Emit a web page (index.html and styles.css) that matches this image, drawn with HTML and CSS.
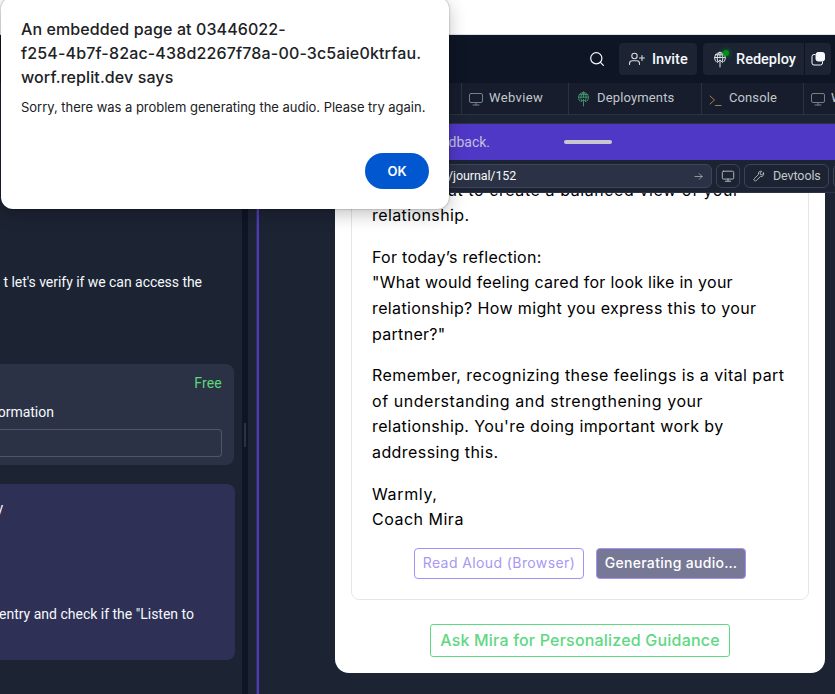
FILE: index.html
```html
<!DOCTYPE html>
<html lang="en">
<head>
<meta charset="utf-8">
<title>Journal - Replit</title>
<link rel="stylesheet" href="styles.css">
</head>
<body>
<svg width="0" height="0" class="defs" aria-hidden="true">
  <symbol id="monitor" viewBox="0 0 16 16"><rect x="1.5" y="2.5" width="13" height="9" rx="1.5"/><path d="M8 11.500V14M5 14h6"/></symbol>
  <symbol id="globe" viewBox="0 0 14 17"><path d="M3.200 10.800A5.400 5.400 0 1 1 10.800 10.800M1.600 6.500h10.800M2.400 3.800h9.200M4.700 10.500C3.600 7 4.300 2.500 7 1.200 9.700 2.500 10.400 7 9.300 10.500M7 1v6M7 16V9M4.500 11.500 7 9l2.500 2.500"/></symbol>
</svg>
<div class="window">
  <div class="browser-strip"></div>
  <header class="topbar">
    <svg class="icon search" viewBox="0 0 16 16"><circle cx="7.300" cy="7.300" r="5.600"/><path d="m11.400 11.400 3 3"/></svg>
    <button class="btn invite">
      <svg class="icon" viewBox="0 0 17 16"><circle cx="6.500" cy="5" r="2.700"/><path d="M1.500 13.500V12.500A2.800 2.800 0 0 1 4.300 9.800H8.700A2.800 2.800 0 0 1 11.500 12.500V13.500M14 4.500v5M11.500 7h5"/></svg>
      <span>Invite</span>
    </button>
    <div class="split">
      <button class="btn redeploy">
        <span class="status"><svg class="icon"><use href="#globe"/></svg><i class="dot"></i></span>
        <span>Redeploy</span>
      </button>
      <button class="btn copy"><svg class="icon" viewBox="0 0 14 14"><path d="M4 2.500H3A2 2 0 0 0 1 4.500v6.500a2 2 0 0 0 2 2h6.500a2 2 0 0 0 2-2V10"/><rect class="solid" x="5" y="0.500" width="8.500" height="8.500" rx="2"/></svg></button>
    </div>
  </header>
  <div class="workspace">
    <aside class="chat">
      <p class="message"><span>t let's verify if we can access the</span></p>
      <section class="card checkpoint">
        <div class="price">Free</div>
        <div class="label"><span>ormation</span></div>
        <div class="field"></div>
      </section>
      <section class="card prompt">
        <p class="first"><span>y</span></p>
        <p class="second"><span>entry and check if the "Listen to</span></p>
      </section>
    </aside>
    <div class="gutter"><i></i></div>
    <main class="pane">
      <nav class="tabs">
        <div class="tab t-web"><svg class="icon mon"><use href="#monitor"/></svg><span>Webview</span></div>
        <div class="tab t-dep"><svg class="icon globe"><use href="#globe"/></svg><span>Deployments</span></div>
        <div class="tab t-con"><svg class="icon prompt-icon" viewBox="0 0 13 13"><path d="m1 2 4.500 4L1 10M6.500 11.500H12"/></svg><span>Console</span></div>
        <div class="tab t-last"><svg class="icon mon"><use href="#monitor"/></svg><span>Webview</span></div>
      </nav>
      <div class="preview">
        <div class="banner"><span class="feedback">feedback.</span><i></i></div>
        <div class="address">
          <div class="url"><span>/journal/152</span><svg class="icon arrow" viewBox="0 0 10 10"><path d="M1 5h8M5.800 1.800 9 5 5.800 8.200"/></svg></div>
          <button class="tool device"><svg class="icon"><use href="#monitor"/></svg></button>
          <button class="tool dev"><svg class="icon wrench" viewBox="0 0 14 14"><path d="M12.400 3.600 10.300 5.500 8.600 5.200 8.300 3.600 10.200 1.600C8 .8 5.800 2.500 6.400 5.200L1.600 10a1.600 1.600 0 0 0 2.300 2.300L8.700 7.500C11.300 8.200 13.200 5.900 12.400 3.600Z"/></svg><span>Devtools</span></button>
          <button class="tool next"></button>
        </div>
        <div class="webview">
          <article class="entry">
            <div class="letter">
              <p><span class="l0">but to create a balanced view of your</span><br><span class="l1">relationship.</span></p>
              <p><span class="l2">For today’s reflection:</span><br><span class="l3">"What would feeling cared for look like in your</span><br><span class="l4">relationship? How might you express this to your</span><br><span class="l5">partner?"</span></p>
              <p><span class="l6">Remember, recognizing these feelings is a vital part</span><br><span class="l7">of understanding and strengthening your</span><br><span class="l8">relationship. You're doing important work by</span><br><span class="l9">addressing this.</span></p>
              <p class="signature"><span class="l10">Warmly,</span><br><span class="l11">Coach Mira</span></p>
              <div class="actions">
                <button class="read"><span>Read Aloud (Browser)</span></button>
                <button class="generating"><span>Generating audio…</span></button>
              </div>
            </div>
            <button class="ask"><span>Ask Mira for Personalized Guidance</span></button>
          </article>
        </div>
      </div>
    </main>
  </div>
</div>
<div class="dialog" role="alertdialog">
  <h1><span class="d1">An embedded page at 03446022-</span><br><span class="d2">f254-4b7f-82ac-438d2267f78a-00-3c5aie0ktrfau.</span><br><span class="d3">worf.replit.dev says</span></h1>
  <p>Sorry, there was a problem generating the audio. Please try again.</p>
  <button>OK</button>
</div>
</body>
</html>
```
FILE: styles.css
```css
* { box-sizing: border-box; }
body { margin: 0; width: 835px; height: 694px; overflow: hidden; background: #1c2333; color: #f5f9fc; font-family: Roboto, "Noto Sans", sans-serif; }
button { font: inherit; color: inherit; margin: 0; padding: 0; border: 0; background: none; }
p, h1 { margin: 0; font-weight: 400; }
span { white-space: nowrap; }
.defs { display: block; position: absolute; }
.icon { fill: none; stroke: currentColor; stroke-width: 1; stroke-linecap: round; stroke-linejoin: round; flex: none; }
.window { width: 835px; height: 694px; display: flex; flex-direction: column; overflow: hidden; }
.browser-strip { height: 35px; flex: none; background: #fff; border-bottom: 1px solid #dfe1e3; }

.topbar { height: 48px; flex: none; background: #0e1525; display: flex; align-items: center; justify-content: flex-end; padding-right: 4px; font-size: 14.500px; font-weight: 500; }
.search { width: 16px; height: 16px; margin-right: 14px; stroke-width: 1.200; }
.btn { height: 32px; background: #1c2333; display: flex; align-items: center; }
.invite { width: 78px; border-radius: 4px; padding-left: 9px; gap: 7px; margin-right: 6px; }
.invite .icon { width: 17px; height: 16px; color: #d5dade; stroke-width: 1.100; }
.split { display: flex; gap: 1px; }
.redeploy { width: 101px; padding-left: 10px; gap: 9px; border-radius: 4px 0 0 4px; }
.status { position: relative; display: flex; }
.status .icon { width: 14px; height: 17px; color: #e1e5e9; }
.dot { position: absolute; width: 6px; height: 6px; left: 10px; top: -1px; border-radius: 50%; background: #009118; box-shadow: 0 0 5px #009118; }
.copy { width: 26px; border-radius: 0 4px 4px 0; justify-content: center; }
.copy .icon { width: 14px; height: 14px; }
.solid { fill: #f5f9fc; }

.workspace { flex: 1; display: flex; min-height: 0; }
.chat { width: 242px; flex: none; padding-top: 189px; overflow: hidden; font-size: 14px; line-height: 20px; }
.message { width: 202px; display: flex; justify-content: flex-end; }
.message span { letter-spacing: -.04px; }
.card { border-radius: 8px; display: flex; flex-direction: column; }
.checkpoint { width: 234px; height: 101px; margin-top: 72px; background: #2b3245; padding: 9px 12px 0 0; border-radius: 0 8px 8px 0; }
.price { align-self: flex-end; color: #5cd87c; letter-spacing: .2px; }
.label { width: 54px; margin-top: 9px; display: flex; justify-content: flex-end; }
.field { height: 28px; margin-top: 7px; border: 1px solid #4e5569; border-left: 0; border-radius: 0 4px 4px 0; }
.prompt { width: 235px; height: 176px; margin-top: 19px; background: #2f3056; border-radius: 0 8px 8px 0; padding-top: 14px; }
.first { width: 3px; display: flex; justify-content: flex-end; }
.second { width: 194px; margin-top: 86px; display: flex; justify-content: flex-end; }
.gutter { width: 6px; flex: none; background: #0e1525; padding: 340px 2px 0; }
.gutter i { display: block; height: 24px; background: #2b3245; }

.pane { flex: 1; min-width: 0; display: flex; flex-direction: column; }
.tabs { height: 32px; flex: none; background: #171d2d; border-bottom: 1px solid #2b3245; display: flex; padding-left: 213px; font-size: 13px; color: #c2c8cc; overflow: hidden; }
.tab { flex: none; border-left: 1px solid #2b3245; display: flex; align-items: center; padding-bottom: 2px; }
.t-web { width: 107px; padding-left: 6px; gap: 5px; letter-spacing: .35px; }
.t-dep { width: 133px; padding-left: 8px; gap: 7px; letter-spacing: .15px; }
.t-con { width: 102px; padding-left: 7px; gap: 7px; letter-spacing: .1px; }
.t-last { width: 107px; padding-left: 6px; gap: 5px; }
.mon { width: 16px; height: 16px; color: #787e89; margin-top: 2px; }
.globe { width: 13px; height: 16px; color: #45966a; margin-top: 2px; }
.prompt-icon { width: 13px; height: 13px; color: #9b8545; margin-top: 5px; }
.preview { flex: 1; min-height: 0; margin: 8px 0 0 8px; border-top: 1px solid #2b3245; border-left: 1px solid #2b3245; display: flex; flex-direction: column; box-shadow: inset 2px 0 #5038c7; }
.banner { height: 36px; flex: none; background: #5038c7; display: flex; align-items: center; font-size: 14px; color: #c2c0dc; }
.feedback { width: 233px; text-align: right; }
.banner i { width: 48px; height: 4px; margin-left: 74px; border-radius: 2px; background: #c8c8cf; }
.address { height: 33px; flex: none; margin-left: 2px; display: flex; padding: 4px 0; gap: 4px; border-bottom: 1px solid #2b3245; font-size: 12.500px; overflow: hidden; }
.url { width: 453px; flex: none; height: 24px; border: 1px solid #3c445c; border-radius: 6px; background: #2b3245; display: flex; align-items: center; justify-content: space-between; padding: 0 8px 0 188px; }
.url span, .dev span { padding-bottom: 1px; }
.url span { letter-spacing: -.1px; }
.arrow { width: 9px; height: 9px; color: #9da2a6; }
.tool { height: 24px; border: 1px solid #3c445c; border-radius: 6px; display: flex; align-items: center; flex: none; color: #c2c8cc; }
.device { width: 24px; justify-content: center; }
.device .icon { width: 14px; height: 14px; }
.dev { width: 85px; padding-left: 8px; gap: 8px; letter-spacing: -.1px; }
.wrench { width: 12px; height: 12px; }
.next { width: 28px; }

.webview { flex: 1; min-height: 0; padding: 0 10px 21px 78px; display: flex; }
.entry { flex: 1; min-width: 0; overflow: hidden; background: #fff; color: #000; border-radius: 0 0 14px 14px; padding: 0 16px 16px; display: flex; flex-direction: column; align-items: stretch; justify-content: flex-end; font-family: Inter, "Open Sans", sans-serif; font-size: 16px; line-height: 25.600px; }
.letter { flex: none; border: 1px solid #e6e6e9; border-radius: 8px; padding: 20px; }
.letter p { margin-bottom: 16px; }
.letter .signature { margin-bottom: 15.300px; }
.l0 { margin-left: 65px; letter-spacing: .58px; }
.l1 { letter-spacing: .4px; }
.l2 { letter-spacing: .28px; }
.l3 { letter-spacing: .27px; }
.l4 { letter-spacing: .37px; }
.l5 { letter-spacing: .3px; }
.l6 { letter-spacing: .43px; }
.l7 { letter-spacing: .56px; }
.l8 { letter-spacing: .39px; }
.l9 { letter-spacing: .42px; }
.l10 { letter-spacing: .65px; }
.l11 { letter-spacing: .5px; }
.actions { display: flex; justify-content: center; gap: 12px; }
.actions button { height: 31px; border: 1px solid #a491f5; border-radius: 4px; font-size: 14px; line-height: 28px; padding-bottom: 1px; }
.actions .read { width: 170px; color: #a898f5; letter-spacing: .4px; }
.actions .generating { width: 150px; background: #777896; color: #fff; font-weight: 500; letter-spacing: .3px; }
.ask { align-self: center; flex: none; width: 300px; height: 33px; margin-top: 24px; border: 1px solid #60d882; border-radius: 3px; color: #60d882; font-weight: 500; letter-spacing: .2px; }

.dialog { position: absolute; left: 1px; top: -3px; width: 448px; height: 212px; background: #fff; color: #202124; border-radius: 12px; padding: 20px; display: flex; flex-direction: column; font-family: Inter, sans-serif; box-shadow: 0 0 2px rgba(0,0,0,.4), 0 5px 18px rgba(0,0,0,.24); }
.dialog h1 { font-size: 16px; line-height: 24px; font-weight: 500; }
.d1, .d3 { letter-spacing: .1px; }
.d2 { letter-spacing: .16px; }
.dialog p { margin-top: 8px; font-size: 13px; line-height: 20px; white-space: nowrap; letter-spacing: -.02px; }
.dialog button { margin-top: auto; align-self: flex-end; width: 64px; height: 36px; border-radius: 18px; background: #0057d0; color: #fff; font-size: 13px; font-weight: 600; }
```
